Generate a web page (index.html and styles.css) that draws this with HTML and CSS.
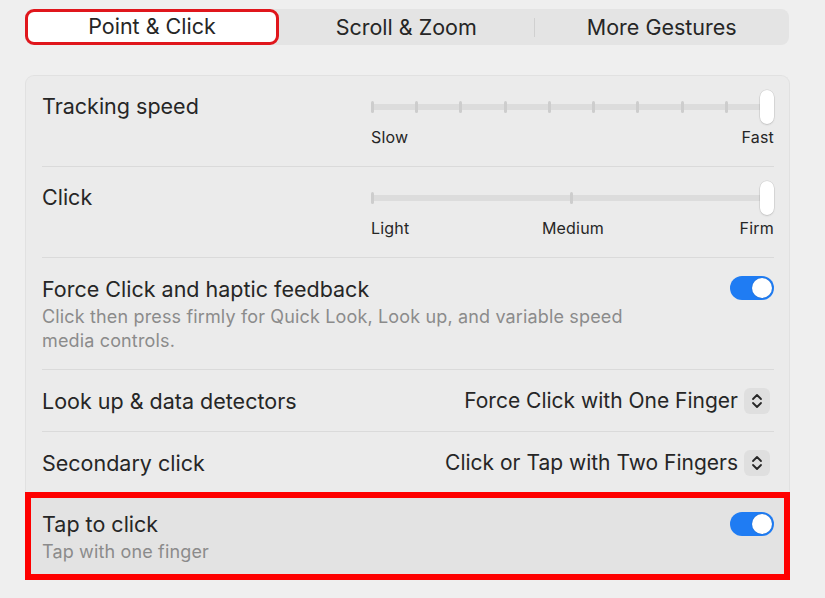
FILE: index.html
```html
<!DOCTYPE html>
<html>
<head>
<meta charset="utf-8">
<link rel="stylesheet" href="styles.css">
</head>
<body>
<div class="page">
  <div class="seg">
    <div class="seg-item selected">Point &amp; Click</div>
    <div class="seg-item">Scroll &amp; Zoom</div>
    <div class="seg-sep"></div>
    <div class="seg-item">More Gestures</div>
  </div>

  <div class="card">
    <div class="row slider-row">
      <div class="title">Tracking speed</div>
      <div class="control">
        <div class="slider">
          <div class="track"></div>
          <div class="ticks">
            <span class="tick"></span><span class="tick"></span><span class="tick"></span><span class="tick"></span><span class="tick"></span><span class="tick"></span><span class="tick"></span><span class="tick"></span><span class="tick"></span><span class="tick"></span>
          </div>
          <div class="knob"></div>
        </div>
        <div class="labels"><span>Slow</span><span>Fast</span></div>
      </div>
    </div>

    <div class="row slider-row">
      <div class="title">Click</div>
      <div class="control">
        <div class="slider">
          <div class="track"></div>
          <div class="ticks">
            <span class="tick"></span><span class="tick"></span><span class="tick"></span>
          </div>
          <div class="knob"></div>
        </div>
        <div class="labels three"><span>Light</span><span class="mid">Medium</span><span class="end">Firm</span></div>
      </div>
    </div>

    <div class="row toggle-row">
      <div class="text">
        <div class="title">Force Click and haptic feedback</div>
        <div class="desc wide">Click then press firmly for Quick Look, Look up, and variable speed media controls.</div>
      </div>
      <div class="toggle"><span class="toggle-knob"></span></div>
    </div>

    <div class="row popup-row">
      <div class="title">Look up &amp; data detectors</div>
      <div class="popup">
        <span>Force Click with One Finger</span>
        <span class="stepper"><svg width="14" height="18" viewBox="0 0 14 18"><path d="M3 7 L7 3 L11 7 M3 11 L7 15 L11 11" fill="none" stroke="#262626" stroke-width="1.8" stroke-linecap="round" stroke-linejoin="round"/></svg></span>
      </div>
    </div>

    <div class="row popup-row last-plain">
      <div class="title">Secondary click</div>
      <div class="popup">
        <span>Click or Tap with Two Fingers</span>
        <span class="stepper"><svg width="14" height="18" viewBox="0 0 14 18"><path d="M3 7 L7 3 L11 7 M3 11 L7 15 L11 11" fill="none" stroke="#262626" stroke-width="1.8" stroke-linecap="round" stroke-linejoin="round"/></svg></span>
      </div>
    </div>

    <div class="row highlight">
      <div class="text">
        <div class="title">Tap to click</div>
        <div class="desc">Tap with one finger</div>
      </div>
      <div class="toggle"><span class="toggle-knob"></span></div>
    </div>
  </div>
</div>
</body>
</html>
```

FILE: styles.css
```css
* { box-sizing: border-box; }
html, body { margin: 0; padding: 0; }
body {
  background: #efefef;
  font-family: "Inter", "Noto Sans", sans-serif;
  color: #262626;
  width: 825px;
  height: 598px;
  overflow: hidden;
}
.page { padding: 8px 0 0 25px; }

.seg {
  width: 764px;
  height: 36px;
  background: #e4e4e4;
  border-radius: 8px;
  display: flex;
  align-items: center;
  margin-top: 1px;
}
.seg-item {
  flex: 1;
  text-align: center;
  font-size: 21.5px;
  line-height: 32px;
  padding-bottom: 1px;
  color: #262626;
}
.seg-item.selected {
  flex: 0 0 254px;
  height: 36px;
  margin-top: -1px;
  background: #fff;
  border: 3px solid #e0161c;
  border-radius: 9px;
  line-height: 28px;
  padding-bottom: 0;
}
.seg-sep {
  width: 1px;
  height: 19px;
  background: #d0d0d0;
}

.card {
  margin-top: 30px;
  width: 765px;
  background: #ebebeb;
  border: 1px solid #e1e1e1;
  border-bottom: none;
  border-radius: 9px 9px 0 0;
  padding: 0 15px 0 16px;
}

.row {
  display: flex;
  justify-content: space-between;
  border-bottom: 1px solid #dadada;
}
.title {
  font-size: 21.5px;
  line-height: 26px;
  color: #262626;
}
.desc {
  font-size: 18px;
  line-height: 24px;
  color: #8b8b8b;
  margin-top: 3px;
  letter-spacing: 0.15px;
}
.desc.wide { max-width: 600px; }

.slider-row {
  padding: 14px 0 19px;
  align-items: flex-start;
}
.slider-row .title { margin-top: 3px; }
.control { width: 403px; }
.slider {
  position: relative;
  height: 34px;
}
.track {
  position: absolute;
  left: 0;
  right: 6px;
  top: 14px;
  height: 6px;
  border-radius: 3px;
  background: #dcdcdc;
}
.ticks {
  position: absolute;
  left: 0;
  right: 2px;
  top: 11px;
  display: flex;
  justify-content: space-between;
}
.tick {
  width: 3px;
  height: 12px;
  border-radius: 1.5px;
  background: #cdcdcd;
}
.knob {
  position: absolute;
  right: 0;
  top: 0;
  width: 14px;
  height: 34px;
  border-radius: 7px;
  background: #fff;
  box-shadow: 0 0 0 0.5px rgba(0,0,0,0.12), 0 1px 2px rgba(0,0,0,0.12);
}
.labels {
  margin-top: 3px;
  display: flex;
  justify-content: space-between;
  font-size: 16px;
  line-height: 20px;
  color: #262626;
  letter-spacing: 0.2px;
}
.labels.three { display: grid; grid-template-columns: 1fr 1fr 1fr; }
.labels .mid { text-align: center; padding-left: 1px; }
.labels .end { text-align: right; }

.toggle-row {
  padding: 18px 0 16px;
  align-items: flex-start;
}
.toggle {
  flex: 0 0 auto;
  width: 44px;
  height: 24px;
  border-radius: 12px;
  background: #1f7cf3;
  position: relative;
  margin-top: 0;
}
.toggle-knob {
  position: absolute;
  right: 2px;
  top: 2px;
  width: 20px;
  height: 20px;
  border-radius: 50%;
  background: #fff;
  box-shadow: 0 0 1px rgba(0,0,0,0.3);
}

.popup-row {
  padding: 18px 0 17px;
  align-items: center;
}
.popup-row.last-plain { border-bottom: none; padding-bottom: 16px; }
.popup {
  display: flex;
  align-items: center;
  gap: 6px;
  font-size: 21px;
  line-height: 26px;
  margin-right: 4px;
}
.stepper {
  width: 26px;
  height: 26px;
  border-radius: 6px;
  background: #dfdfdf;
  display: flex;
  align-items: center;
  justify-content: center;
}

.highlight {
  margin: 0 -16px 0 -17px;
  border: 6px solid #fe0000;
  background: #e3e3e3;
  padding: 13px 10px 10px 11px;
  align-items: flex-start;
}
.highlight .toggle { margin-top: 1px; }
```
